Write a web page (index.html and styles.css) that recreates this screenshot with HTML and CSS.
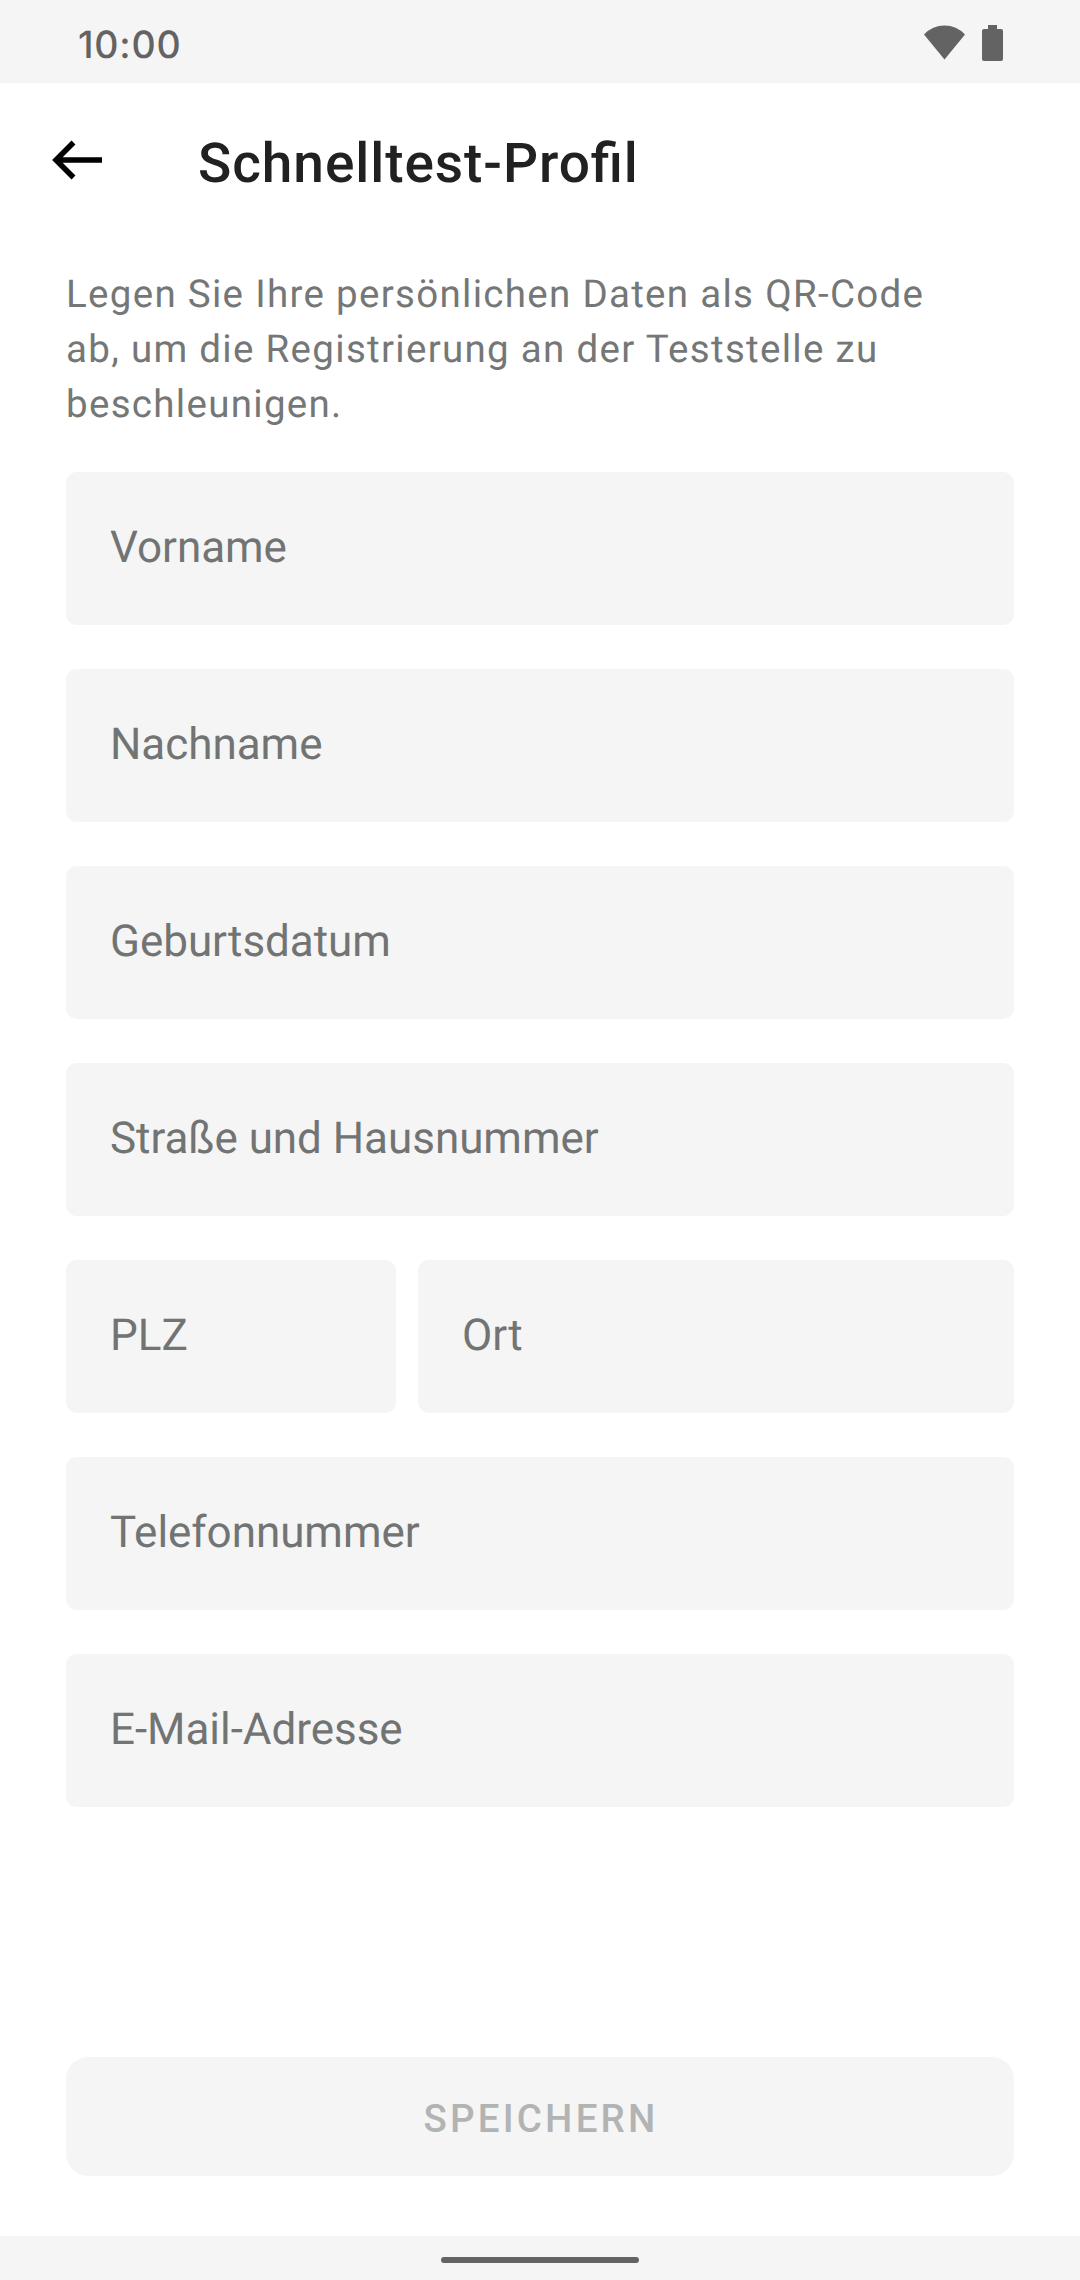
FILE: index.html
```html
<!DOCTYPE html>
<html lang="de">
<head>
<meta charset="utf-8">
<title>Schnelltest-Profil</title>
<link rel="stylesheet" href="styles.css">
</head>
<body>
<div class="status-bar">
  <span class="clock">10:00</span>
  <div class="status-icons">
    <svg class="wifi" width="41" height="35" viewBox="0 0 41 35"><path d="M20.500 34.500L0 9.500Q8.500 0.500 20.500 0.500T41 9.500Z"/></svg>
    <svg class="battery" width="21" height="36" viewBox="0 0 21 36"><path d="M6 0h9v4h4a2 2 0 0 1 2 2v28a2 2 0 0 1-2 2h-17a2 2 0 0 1-2-2v-28a2 2 0 0 1 2-2h4z"/></svg>
  </div>
</div>
<header class="toolbar">
  <svg class="back" width="50" height="40" viewBox="0 0 50 40"><path d="M21.500 2.500L4 20l17.500 17.500M4 20h46"/></svg>
  <h1 class="title">Schnelltest-Profil</h1>
</header>
<main class="content">
  <p class="intro">Legen Sie Ihre persönlichen Daten als QR-Code<br>ab, um die Registrierung an der Teststelle zu<br>beschleunigen.</p>
  <form class="form">
    <div class="field"><span>Vorname</span></div>
    <div class="field"><span>Nachname</span></div>
    <div class="field"><span>Geburtsdatum</span></div>
    <div class="field"><span>Straße und Hausnummer</span></div>
    <div class="row">
      <div class="field"><span>PLZ</span></div>
      <div class="field"><span>Ort</span></div>
    </div>
    <div class="field"><span>Telefonnummer</span></div>
    <div class="field"><span>E-Mail-Adresse</span></div>
  </form>
  <button class="save" type="button" disabled><span>SPEICHERN</span></button>
</main>
<div class="nav-bar"><div class="handle"></div></div>
</body>
</html>
```
FILE: styles.css
```css
* { box-sizing: border-box; }
body {
  margin: 0;
  width: 1080px;
  height: 2280px;
  display: flex;
  flex-direction: column;
  background: #fff;
  font-family: Roboto, sans-serif;
  text-rendering: geometricPrecision;
  overflow: hidden;
}
.status-bar {
  height: 83px;
  background: #f5f5f5;
  display: flex;
  justify-content: space-between;
  padding: 0 77px 0 78px;
  color: #636363;
}
.clock { font-family: Inter, sans-serif; font-size: 37.500px; font-weight: 450; line-height: 46px; padding-top: 23px; letter-spacing: 0.800px; }
.status-icons { display: flex; gap: 17px; padding-top: 25px; fill: #636363; }
.toolbar { height: 154px; display: flex; align-items: center; padding-left: 52px; }
.back { fill: none; stroke: #000; stroke-width: 5.500; }
.title {
  margin: 7px 0 0 96px;
  font-size: 55px;
  line-height: 64px;
  font-weight: 500;
  color: #212121;
  letter-spacing: 0.930px;
  font-feature-settings: "liga" 1;
}
.content { flex: 1; display: flex; flex-direction: column; padding: 30px 66px 60px; }
.intro { margin: 0 0 40px; font-size: 38.500px; line-height: 55px; letter-spacing: 1.300px; color: #757777; }
.form { display: grid; gap: 44px; }
.field {
  height: 153px;
  background: #f5f5f5;
  border-radius: 11px;
  padding: 0 44px;
  font-size: 44px;
  line-height: 150px;
  letter-spacing: -0.040px;
  color: #727474;
}
.row { display: grid; grid-template-columns: 330px 1fr; gap: 22px; }
.save {
  margin-top: auto;
  height: 119px;
  border: 0;
  border-radius: 22px;
  background: #f5f5f5;
  color: #b2b4b4;
  font: 500 38.500px/121px Roboto, sans-serif;
  letter-spacing: 3.200px;
  padding: 1px 0 0 2px;
}
.nav-bar { height: 44px; background: #f5f5f5; display: flex; justify-content: center; padding-top: 21px; }
.handle { width: 198px; height: 6px; border-radius: 3px; background: #636363; }
```
